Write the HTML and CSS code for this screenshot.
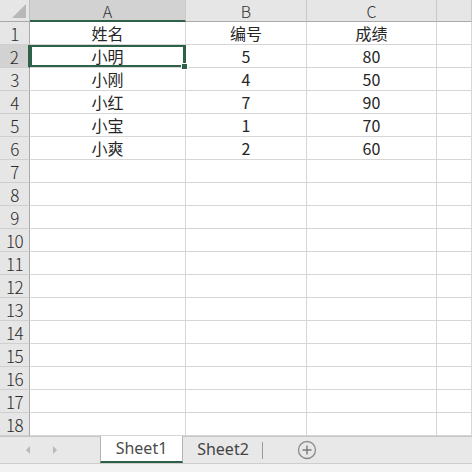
FILE: index.html
```html
<!DOCTYPE html>
<html lang="zh">
<head>
<meta charset="utf-8">
<link rel="stylesheet" href="styles.css">
</head>
<body>
<div class="app">
  <div class="sheet">
    <div class="ch corner"><span class="tri"></span></div>
    <div class="ch ch-sel">A</div>
    <div class="ch">B</div>
    <div class="ch">C</div>
    <div class="ch"></div>

    <div class="rh">1</div><div class="c">姓名</div><div class="c">编号</div><div class="c">成绩</div><div class="c"></div>
    <div class="rh rh-sel">2</div><div class="c sel">小明<span class="handle"></span></div><div class="c">5</div><div class="c">80</div><div class="c"></div>
    <div class="rh">3</div><div class="c">小刚</div><div class="c">4</div><div class="c">50</div><div class="c"></div>
    <div class="rh">4</div><div class="c">小红</div><div class="c">7</div><div class="c">90</div><div class="c"></div>
    <div class="rh">5</div><div class="c">小宝</div><div class="c">1</div><div class="c">70</div><div class="c"></div>
    <div class="rh">6</div><div class="c">小爽</div><div class="c">2</div><div class="c">60</div><div class="c"></div>
    <div class="rh">7</div><div class="c"></div><div class="c"></div><div class="c"></div><div class="c"></div>
    <div class="rh">8</div><div class="c"></div><div class="c"></div><div class="c"></div><div class="c"></div>
    <div class="rh">9</div><div class="c"></div><div class="c"></div><div class="c"></div><div class="c"></div>
    <div class="rh">10</div><div class="c"></div><div class="c"></div><div class="c"></div><div class="c"></div>
    <div class="rh">11</div><div class="c"></div><div class="c"></div><div class="c"></div><div class="c"></div>
    <div class="rh">12</div><div class="c"></div><div class="c"></div><div class="c"></div><div class="c"></div>
    <div class="rh">13</div><div class="c"></div><div class="c"></div><div class="c"></div><div class="c"></div>
    <div class="rh">14</div><div class="c"></div><div class="c"></div><div class="c"></div><div class="c"></div>
    <div class="rh">15</div><div class="c"></div><div class="c"></div><div class="c"></div><div class="c"></div>
    <div class="rh">16</div><div class="c"></div><div class="c"></div><div class="c"></div><div class="c"></div>
    <div class="rh">17</div><div class="c"></div><div class="c"></div><div class="c"></div><div class="c"></div>
    <div class="rh">18</div><div class="c"></div><div class="c"></div><div class="c"></div><div class="c"></div>
  </div>
  <div class="tabbar">
    <div class="nav">
      <span class="arrow left"></span>
      <span class="arrow right"></span>
    </div>
    <div class="tab active">Sheet1</div>
    <div class="tab">Sheet2</div>
    <div class="add">
      <svg width="20" height="20" viewBox="0 0 20 20">
        <circle cx="10" cy="10" r="8.5" fill="none" stroke="#8a8a8a" stroke-width="1.3"/>
        <path d="M10 5.5v9M5.5 10h9" stroke="#7a7a7a" stroke-width="1.4"/>
      </svg>
    </div>
  </div>
  <div class="status"></div>
</div>
</body>
</html>
```

FILE: styles.css
```css
* { box-sizing: border-box; }
html, body { margin: 0; padding: 0; }
body {
  width: 472px;
  height: 472px;
  overflow: hidden;
  background: #fff;
  font-family: "Noto Sans CJK SC", "Noto Sans", sans-serif;
  color: #262626;
}
.app { width: 472px; height: 472px; display: flex; flex-direction: column; }

.sheet {
  display: grid;
  grid-template-columns: 30px 156px 121px 130px 35px;
  grid-template-rows: 22px repeat(18, 23px);
  height: 436px;
  overflow: hidden;
}
.ch {
  background: #e6e6e6;
  border-right: 1px solid #c9c9c9;
  border-bottom: 1px solid #a9a9a9;
  display: flex;
  align-items: center;
  justify-content: center;
  font-size: 16px;
  font-weight: 300;
  color: #333;
  line-height: 1;
  padding-top: 1px;
}
.ch-sel {
  background: #d2d2d2;
  border-bottom: 2px solid #2f6148;
}
.corner { position: relative; border-right: 1px solid #c0c0c0; }
.tri {
  position: absolute;
  right: 3px;
  bottom: 3px;
  width: 0; height: 0;
  border-left: 14px solid transparent;
  border-bottom: 14px solid #b8b8b8;
}
.rh {
  background: #e6e6e6;
  border-right: 1px solid #a9a9a9;
  border-bottom: 1px solid #cfcfcf;
  display: flex;
  align-items: center;
  justify-content: center;
  font-size: 17px;
  font-weight: 300;
  color: #2a2a2a;
  line-height: 1;
  letter-spacing: -0.5px;
}
.rh-sel { background: #d2d2d2; border-right: 2px solid #2f6148; }
.c {
  border-right: 1px solid #d6d6d6;
  border-bottom: 1px solid #d6d6d6;
  display: flex;
  align-items: center;
  justify-content: center;
  font-size: 16px;
  line-height: 1;
  color: #262626;
}
.sel {
  position: relative;
  box-shadow: inset 0 0 0 2px #2f6148;
  border-right-color: #2f6148;
}
.handle {
  position: absolute;
  right: -3px;
  bottom: -3px;
  width: 5px;
  height: 5px;
  background: #2f6148;
  border: 1px solid #fff;
  box-sizing: content-box;
  z-index: 2;
}

.tabbar {
  height: 27px;
  background: #e8e8e8;
  border-top: 1px solid #c6c6c6;
  display: flex;
  align-items: stretch;
}
.nav {
  width: 100px;
  display: flex;
  align-items: center;
  padding-left: 26px;
  gap: 23px;
}
.arrow { width: 0; height: 0; border-top: 4px solid transparent; border-bottom: 4px solid transparent; }
.arrow.left { border-right: 4px solid #b9b9b9; }
.arrow.right { border-left: 4px solid #b9b9b9; }
.tab {
  display: flex;
  align-items: center;
  justify-content: center;
  font-family: "Noto Sans", "Open Sans", sans-serif;
  font-size: 16px;
  color: #444;
  padding-bottom: 2px;
}
.tab.active {
  width: 83px;
  background: #fff;
  border-left: 1px solid #b4b4b4;
  border-right: 1px solid #b4b4b4;
  border-bottom: 2px solid #2f6148;
  margin-top: -1px;
  color: #4b4b4b;
}
.tab:not(.active) {
  width: 80px;
  position: relative;
}
.tab:not(.active)::after {
  content: "";
  position: absolute;
  right: 0;
  top: 5px;
  bottom: 4px;
  width: 1px;
  background: #9a9a9a;
}
.add {
  width: 88px;
  display: flex;
  align-items: center;
  justify-content: center;
}
.status {
  flex: 1;
  background: #f2f2f2;
  border-top: 1px solid #cdcdcd;
}
```
